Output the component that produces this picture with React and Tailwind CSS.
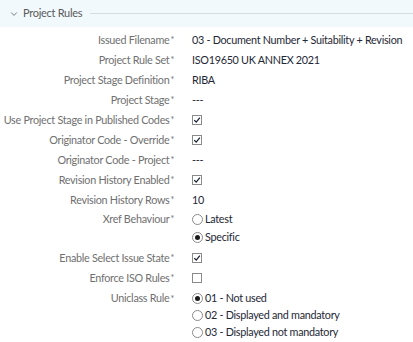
import React from "react";

const Check = ({ checked }) => (
  <span className="inline-flex h-[10px] w-[10px] items-center justify-center border border-[#8a8a8a] bg-white">
    {checked && (
      <svg viewBox="0 0 10 10" className="h-[8px] w-[8px]">
        <path d="M1.5 5.2 L4 7.6 L8.6 2" fill="none" stroke="#1a2233" strokeWidth="1.6" />
      </svg>
    )}
  </span>
);

const Radio = ({ on, label }) => (
  <div className="flex h-[18px] items-center gap-[2px]">
    <span className="inline-flex h-[11px] w-[11px] items-center justify-center rounded-full border border-[#8a8a8a] bg-white">
      {on && <span className="h-[5px] w-[5px] rounded-full bg-[#1a1a1a]" />}
    </span>
    <span>{label}</span>
  </div>
);

const Row = ({ label, children, className = "h-[20px]" }) => (
  <div className={"flex " + className}>
    <div className="flex w-[174px] shrink-0 items-center justify-end text-[#707070]">
      {label}
      <span className="ml-[1px] text-[9px]">*</span>
    </div>
    <div className="ml-[18px] flex items-center text-[#1e2836]">{children}</div>
  </div>
);

export default function App() {
  return (
    <div
      className="h-[342px] w-[413px] overflow-hidden whitespace-nowrap bg-white text-[10.8px] tracking-[-0.28px]"
      style={{ fontFamily: "Lato, 'Noto Sans', sans-serif" }}
    >
      <div className="flex h-[27px] items-center bg-[#f1f9fd] pl-[10px] text-[#5a5a5a]">
        <svg viewBox="0 0 10 10" className="h-[8px] w-[8px]">
          <path d="M1.5 3.2 L5 6.8 L8.5 3.2" fill="none" stroke="#6a6a6a" strokeWidth="1.1" />
        </svg>
        <span className="ml-[5px] text-[11px]">Project Rules</span>
        <div className="ml-[8px] h-px flex-1 bg-[#d4dde3]" />
      </div>
      <div className="mt-[3px]">
        <Row label="Issued Filename">03 - Document Number + Suitability + Revision</Row>
        <Row label="Project Rule Set">ISO19650 UK ANNEX 2021</Row>
        <Row label="Project Stage Definition">RIBA</Row>
        <Row label="Project Stage">---</Row>
        <Row label="Use Project Stage in Published Codes">
          <Check checked />
        </Row>
        <Row label="Originator Code - Override">
          <Check checked />
        </Row>
        <Row label="Originator Code - Project">---</Row>
        <Row label="Revision History Enabled">
          <Check checked />
        </Row>
        <Row label="Revision History Rows">10</Row>
        <div className="flex">
          <div className="flex h-[18px] w-[174px] shrink-0 items-center justify-end text-[#707070]">
            Xref Behaviour<span className="ml-[1px] text-[9px]">*</span>
          </div>
          <div className="ml-[18px] flex flex-col text-[#1e2836]">
            <Radio label="Latest" />
            <Radio on label="Specific" />
          </div>
        </div>
        <Row label="Enable Select Issue State" className="mt-[2px] h-[20px]">
          <Check checked />
        </Row>
        <Row label="Enforce ISO Rules">
          <Check />
        </Row>
        <div className="mt-[2px] flex">
          <div className="flex h-[17px] w-[174px] shrink-0 items-center justify-end text-[#707070]">
            Uniclass Rule<span className="ml-[1px] text-[9px]">*</span>
          </div>
          <div className="ml-[18px] flex flex-col text-[#1e2836] [&>div]:h-[17px]">
            <Radio on label="01 - Not used" />
            <Radio label="02 - Displayed and mandatory" />
            <Radio label="03 - Displayed not mandatory" />
          </div>
        </div>
      </div>
    </div>
  );
}
